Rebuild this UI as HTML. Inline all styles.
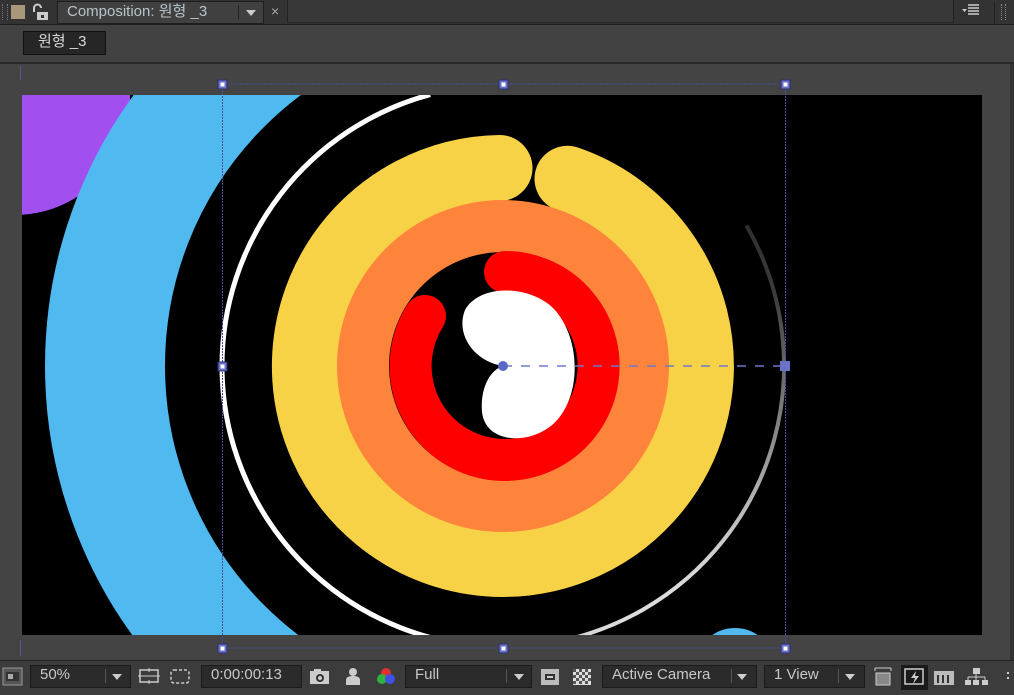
<!DOCTYPE html>
<html><head><meta charset="utf-8"><style>
html,body{margin:0;padding:0;width:1014px;height:695px;overflow:hidden;background:#3e3e3e;font-family:"Liberation Sans","Noto Sans CJK KR",sans-serif;position:relative}
.abs{position:absolute}
.txt{color:#c8c8c8;font-size:15px;line-height:18px}
.box{position:absolute;background:#2b2b2b;border:1px solid #1b1b1b;box-sizing:border-box}
</style></head><body>
<div class="abs" style="left:0;top:0;width:1014px;height:24px;background:#333"></div>
<div class="abs" style="left:2px;top:4px;width:4px;height:16px;border-left:1px dotted #777;border-right:1px dotted #777"></div>
<div class="abs" style="left:11px;top:5px;width:14px;height:14px;background:#a8977a"></div>
<svg class="abs" style="left:31px;top:3px" width="20" height="18"><path d="M3 9V5a3.5 3.5 0 0 1 7 0" fill="none" stroke="#ccc" stroke-width="2"/><rect x="6" y="9" width="11" height="8" fill="#ccc"/><rect x="10" y="12" width="3" height="3" fill="#333"/></svg>
<div class="abs" style="left:57px;top:1px;width:207px;height:23px;background:#404040;border:1px solid #1e1e1e;box-sizing:border-box"></div>
<div class="abs txt" style="left:67px;top:3px;color:#b8c4cc">Composition: 원형 _3</div>
<div class="abs" style="left:238px;top:5px;width:1px;height:14px;background:#222"></div>
<div class="abs" style="left:246px;top:10px;width:0;height:0;border-left:5px solid transparent;border-right:5px solid transparent;border-top:6px solid #ccc"></div>
<div class="abs" style="left:271px;top:2px;color:#aaa;font-size:14px;line-height:18px">×</div>
<div class="abs" style="left:287px;top:0;width:667px;height:23px;background:#383838;border:1px solid #222;border-top:none;box-sizing:border-box"></div>
<svg class="abs" style="left:962px;top:3px" width="24" height="14"><path d="M0 6h5l-2.5 3z" fill="#ccc"/><path d="M6 2h11M6 5h11M6 8h11M6 11h11" stroke="#ccc" stroke-width="1.4"/></svg>
<div class="abs" style="left:994px;top:2px;width:1px;height:22px;background:#222"></div>
<div class="abs" style="left:1001px;top:4px;width:3px;height:16px;border-left:1px dotted #888;border-right:1px dotted #888"></div>
<div class="abs" style="left:0;top:24px;width:1014px;height:37px;background:#424242;border-top:1px solid #1e1e1e;border-bottom:2px solid #2a2a2a"></div>
<div class="abs" style="left:23px;top:31px;width:83px;height:24px;background:#262626;border:1px solid #111;box-sizing:border-box"></div>
<div class="abs" style="left:38px;top:33px;color:#d8d8d8;font-size:15px;line-height:18px">원형 _3</div>
<div class="abs" style="left:0;top:64px;width:1010px;height:596px;background:#444"></div>
<div class="abs" style="left:1010px;top:64px;width:4px;height:596px;background:#333"></div>
<div class="abs" style="left:20px;top:66px;width:1px;height:14px;background:#5a5a8a"></div>
<div class="abs" style="left:20px;top:640px;width:1px;height:16px;background:#5a5a8a"></div>
<svg class="abs" style="left:0;top:0" width="1014" height="660">
<defs>
<clipPath id="c"><rect x="22" y="95" width="960" height="540"/></clipPath>
<linearGradient id="g" gradientUnits="userSpaceOnUse" x1="0" y1="647" x2="0" y2="225"><stop offset="0" stop-color="#ddd"/><stop offset="0.2" stop-color="#888"/><stop offset="0.5" stop-color="#3a3a3a"/><stop offset="1" stop-color="#1a1a1a"/></linearGradient>
</defs>
<rect x="22" y="95" width="960" height="540" fill="#000"/>
<g clip-path="url(#c)">
<circle cx="15" cy="100" r="115" fill="#a24ff0"/>
<path d="M503 -32 A398 398 0 0 0 503 764" fill="none" stroke="#4fb9f0" stroke-width="120"/>
<ellipse cx="735" cy="652" rx="32" ry="24" fill="#4fb9f0"/>
<circle cx="503" cy="366" r="281" fill="none" stroke="#fff" stroke-width="5" stroke-dasharray="809 2000" transform="rotate(90 503 366)"/>
<circle cx="503" cy="366" r="281" fill="none" stroke="url(#g)" stroke-width="4" stroke-dasharray="588 2000" transform="rotate(-30 503 366)"/>
<path d="M567.5 178.8 A198 198 0 1 1 499.5 168" fill="none" stroke="#f8d246" stroke-width="66" stroke-linecap="round"/>
<circle cx="503" cy="366" r="140" fill="none" stroke="#fe843c" stroke-width="52"/>
<path d="M505 272 A94 94 0 1 1 425 316" fill="none" stroke="#fe0000" stroke-width="42" stroke-linecap="round"/>
<path d="M503 366 C475 362 455 335 465 310 C480 283 532 285 555 310 C585 345 580 410 545 430 C520 445 485 440 482 412 C480 388 490 370 503 366 Z" fill="#fff"/>
</g>
<g stroke="#4a4f9a" stroke-width="1" stroke-dasharray="2 1" fill="none">
<path d="M222 84H785M222 648H785M222.5 84V648M785.5 84V648"/>
</g>
<path d="M503 366H785" stroke="#7078c8" stroke-width="1.5" stroke-dasharray="9 9"/>
<g fill="#6a72c8" stroke="#2a2f70">
<rect x="218" y="80" width="9" height="9"/><rect x="499" y="80" width="9" height="9"/><rect x="781" y="80" width="9" height="9"/>
<rect x="218" y="362" width="9" height="9"/><rect x="218" y="644" width="9" height="9"/><rect x="499" y="644" width="9" height="9"/><rect x="781" y="644" width="9" height="9"/>
</g>
<g fill="#fff"><rect x="220.5" y="82.5" width="4" height="4"/><rect x="501.5" y="82.5" width="4" height="4"/><rect x="783.5" y="82.5" width="4" height="4"/><rect x="220.5" y="364.5" width="4" height="4"/><rect x="220.5" y="646.5" width="4" height="4"/><rect x="501.5" y="646.5" width="4" height="4"/><rect x="783.5" y="646.5" width="4" height="4"/></g>
<rect x="780" y="361" width="10" height="10" fill="#6a72c8"/>
<circle cx="503" cy="366" r="5" fill="#5a68c8"/>
</svg>
<div class="abs" style="left:0;top:660px;width:1014px;height:35px;background:#3c3c3c;border-top:1px solid #222;box-sizing:border-box"></div>
<svg class="abs" style="left:2px;top:667px" width="22" height="20"><rect x="1" y="1" width="19" height="17" fill="#555" stroke="#999"/><rect x="4" y="5" width="13" height="9" fill="#333"/><rect x="6" y="7" width="5" height="5" fill="#aaa"/></svg>
<div class="box" style="left:30px;top:665px;width:101px;height:23px"></div>
<div class="abs txt" style="left:40px;top:666px">50%</div>
<div class="abs" style="left:105px;top:669px;width:1px;height:14px;background:#555"></div>
<div class="abs" style="left:112px;top:674px;border-left:5px solid transparent;border-right:5px solid transparent;border-top:6px solid #ccc"></div>
<svg class="abs" style="left:138px;top:666px" width="60" height="22"><rect x="2" y="4" width="18" height="12" fill="none" stroke="#ccc" stroke-width="1.5"/><path d="M0 10h22M11 2v4M11 14v4" stroke="#ccc"/><rect x="33" y="4" width="18" height="13" rx="3" fill="none" stroke="#ccc" stroke-width="1.5" stroke-dasharray="3 2"/></svg>
<div class="box" style="left:201px;top:665px;width:101px;height:23px"></div>
<div class="abs txt" style="left:211px;top:666px">0:00:00:13</div>
<svg class="abs" style="left:308px;top:666px" width="100" height="22"><rect x="2" y="5" width="19" height="13" fill="#ccc"/><rect x="6" y="3" width="7" height="3" fill="#ccc"/><circle cx="12" cy="12" r="4" fill="#333"/><circle cx="12" cy="12" r="2" fill="#ccc"/><circle cx="45" cy="6" r="4" fill="#ccc"/><path d="M38 19v-5c0-3 3-4 7-4s7 1 7 4v5z" fill="#ccc"/><circle cx="78" cy="7" r="5" fill="#e03030"/><circle cx="74" cy="13" r="5" fill="#30b040"/><circle cx="82" cy="13" r="5" fill="#4050e0"/></svg>
<div class="box" style="left:405px;top:665px;width:127px;height:23px"></div>
<div class="abs txt" style="left:415px;top:666px">Full</div>
<div class="abs" style="left:506px;top:669px;width:1px;height:14px;background:#555"></div>
<div class="abs" style="left:514px;top:674px;border-left:5px solid transparent;border-right:5px solid transparent;border-top:6px solid #ccc"></div>
<svg class="abs" style="left:540px;top:666px" width="56" height="22"><rect x="1" y="3" width="18" height="16" fill="#bbb"/><rect x="5" y="8" width="10" height="6" fill="#333"/><rect x="7" y="10" width="6" height="2" fill="#ccc"/><rect x="33" y="3" width="18" height="16" fill="#ddd"/><path d="M33 3h3v3h-3zM39 3h3v3h-3zM45 3h3v3h-3zM36 6h3v3h-3zM42 6h3v3h-3zM48 6h3v3h-3zM33 9h3v3h-3zM39 9h3v3h-3zM45 9h3v3h-3zM36 12h3v3h-3zM42 12h3v3h-3zM48 12h3v3h-3zM33 15h3v3h-3zM39 15h3v3h-3zM45 15h3v3h-3z" fill="#555"/></svg>
<div class="box" style="left:602px;top:665px;width:155px;height:23px"></div>
<div class="abs txt" style="left:612px;top:666px">Active Camera</div>
<div class="abs" style="left:731px;top:669px;width:1px;height:14px;background:#555"></div>
<div class="abs" style="left:737px;top:674px;border-left:5px solid transparent;border-right:5px solid transparent;border-top:6px solid #ccc"></div>
<div class="box" style="left:764px;top:665px;width:101px;height:23px"></div>
<div class="abs txt" style="left:774px;top:666px">1 View</div>
<div class="abs" style="left:838px;top:669px;width:1px;height:14px;background:#555"></div>
<div class="abs" style="left:845px;top:674px;border-left:5px solid transparent;border-right:5px solid transparent;border-top:6px solid #ccc"></div>
<svg class="abs" style="left:872px;top:664px" width="142" height="28"><path d="M3 4h16M3 4v3M19 4v3" stroke="#ccc"/><rect x="4" y="9" width="14" height="12" fill="#888" stroke="#ccc"/><rect x="29" y="1" width="27" height="25" fill="#1a1a1a"/><rect x="33" y="5" width="18" height="15" fill="none" stroke="#ccc" stroke-width="1.5"/><path d="M44 7l-5 7h4l-2 6 6-8h-4z" fill="#ccc"/><rect x="62" y="7" width="20" height="14" fill="#bbb"/><path d="M66 11v8M71 11v8M76 11v8" stroke="#333" stroke-width="2"/><rect x="101" y="4" width="7" height="6" fill="#ccc"/><path d="M104 10v3M96 13h17M96 13v3M113 13v3M104 13v3" stroke="#ccc"/><rect x="93" y="16" width="6" height="5" fill="#ccc"/><rect x="101" y="16" width="6" height="5" fill="#ccc"/><rect x="110" y="16" width="6" height="5" fill="#ccc"/><path d="M136 8v2M136 13v2" stroke="#ccc" stroke-width="2"/></svg>
</body></html>
